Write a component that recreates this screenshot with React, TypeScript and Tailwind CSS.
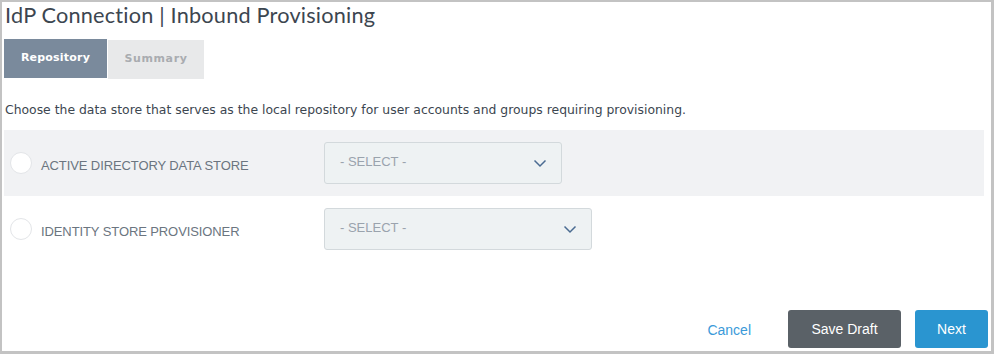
import React from 'react';

const rows = [
  { label: 'ACTIVE DIRECTORY DATA STORE', shaded: true, selectWidth: 'w-[238px]' },
  { label: 'IDENTITY STORE PROVISIONER', shaded: false, selectWidth: 'w-[268px]' },
];

const Chevron = () => (
  <svg width="14" height="9" viewBox="0 0 14 9" fill="none">
    <path d="M1.5 1.5L7 7L12.5 1.5" stroke="#4a6b91" strokeWidth="1.5" />
  </svg>
);

const App = () => {
  return (
    <div className="w-[994px] h-[354px] bg-white border-t-2 border-l-2 border-r-[3px] border-b-[3px] border-[#c3c3c3] flex flex-col font-['Liberation_Sans',Arial,sans-serif]">
      <h1 className="pl-[3px] pt-[0px] h-[36px] text-[21.7px] leading-[26px] text-[#3c4650] font-['Lato',sans-serif] tracking-[0.2px]">
        IdP Connection | Inbound Provisioning
      </h1>

      <div className="flex pl-[2px] mt-[1px]">
        <div className="w-[103px] h-[39px] bg-[#7a8a9c] flex items-center justify-center text-[11px] font-bold text-white tracking-[0.2px] font-['DejaVu_Sans',sans-serif]">
          Repository
        </div>
        <div className="w-[96px] h-[39px] ml-[1px] mt-[1px] bg-[#e8e9ea] flex items-center justify-center text-[11px] font-bold text-[#a9acb0] tracking-[0.6px] font-['DejaVu_Sans',sans-serif]">
          Summary
        </div>
      </div>

      <p className="pl-[3px] mt-[24px] text-[12.4px] leading-[14px] text-[#3c4650] font-['DejaVu_Sans',sans-serif]">
        Choose the data store that serves as the local repository for user accounts and groups requiring provisioning.
      </p>

      <div className="mt-[13px] ml-[2px] mr-[7px] flex flex-col">
        {rows.map((r) => (
          <div
            key={r.label}
            className={`h-[66px] flex items-center ${r.shaded ? 'bg-[#f1f2f4]' : 'bg-white'}`}
          >
            <div className="w-[22px] h-[22px] ml-[6px] rounded-full bg-white border border-[#e3e5e8]" />
            <span className="ml-[9px] w-[283px] text-[13px] text-[#6b7580] tracking-[-0.1px] mt-[5px]">
              {r.label}
            </span>
            <div
              className={`${r.selectWidth} h-[42px] bg-[#eef2f3] border border-[#d3d9dc] rounded-[3px] flex items-center justify-between pl-[15px] pr-[14px]`}
            >
              <span className="text-[13px] text-[#9aa3ad] -mt-[3px]">- SELECT -</span>
              <Chevron />
            </div>
          </div>
        ))}
      </div>

      <div className="mt-auto mb-[3px] flex items-center justify-end pr-[3px]">
        <button className="text-[14px] text-[#3a9ad9] mr-[37px] mt-[2px]">Cancel</button>
        <button className="w-[113px] h-[38px] rounded-[3px] bg-[#5a6167] text-white text-[14px]">
          Save Draft
        </button>
        <button className="w-[73px] h-[38px] ml-[14px] rounded-[3px] bg-[#2a95d0] text-white text-[14px]">
          Next
        </button>
      </div>
    </div>
  );
};

export default App;
